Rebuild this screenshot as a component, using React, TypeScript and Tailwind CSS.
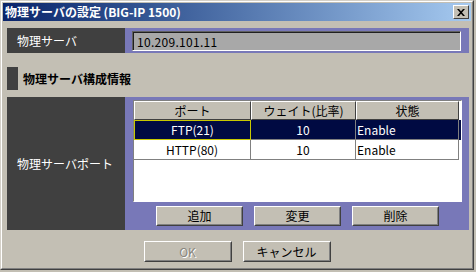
const jp = "font-['Noto_Sans_CJK_JP','Noto_Sans',sans-serif]";

function RaisedButton({ label, disabled, className = '' }: { label: string; disabled?: boolean; className?: string }) {
  return (
    <div className={`border border-t-white border-l-white border-r-[#404040] border-b-[#404040] bg-[#c3bfb4] ${className}`}>
      <div className="h-full flex items-center justify-center border border-t-[#c3bfb4] border-l-[#c3bfb4] border-r-[#808080] border-b-[#808080]">
        <span
          className={`text-[12px] leading-none ${
            disabled ? 'text-[#8a877f] [text-shadow:1px_1px_0_#ffffff]' : 'text-black'
          }`}
        >
          {label}
        </span>
      </div>
    </div>
  );
}

const columns = [
  { name: 'ポート', width: 'w-[117px]' },
  { name: 'ウェイト(比率)', width: 'w-[105px]' },
  { name: '状態', width: 'w-[103px]' },
];

const rows = [
  { port: 'FTP(21)', weight: '10', state: 'Enable', selected: true },
  { port: 'HTTP(80)', weight: '10', state: 'Enable', selected: false },
];

export default function App() {
  return (
    <div className={`w-[476px] h-[272px] bg-[#c3bfb4] overflow-hidden ${jp}`}>
      <div className="w-[474px] h-[270px] border border-t-[#d4d0c8] border-l-[#d4d0c8] border-r-[#404040] border-b-[#404040]">
        <div className="h-full border border-t-white border-l-white border-r-[#808080] border-b-[#808080] p-px flex flex-col">
          {/* Title bar */}
          <div className="h-[18px] flex items-center justify-between bg-linear-to-r from-[#0a246a] to-[#a6caf0] pl-[2px] pr-[2px]">
            <span className="text-white text-[12px] font-bold leading-none">物理サーバの設定 (BIG-IP 1500)</span>
            <div className="w-[16px] h-[14px] bg-[#c3bfb4] border border-t-white border-l-white border-r-[#404040] border-b-[#404040] flex items-center justify-center">
              <svg width="8" height="7" viewBox="0 0 8 7">
                <path d="M0 0h2l2 2.2L6 0h2L5 3.5 8 7H6L4 4.8 2 7H0l3-3.5z" fill="#000" />
              </svg>
            </div>
          </div>

          <div className="ml-[4px] w-[462px] flex flex-col">
            {/* Server row */}
            <div className="mt-[7px] h-[25px] flex">
              <div className="w-[118px] bg-[#404040] flex items-center pl-[10px]">
                <span className="text-white text-[12px] leading-none">物理サーバ</span>
              </div>
              <div className="flex-1 bg-[#7878b8] pl-[7px] pr-[8px] pt-[3px] pb-[2px]">
                <div className="h-full bg-[#a8a8a8] border border-t-[#606060] border-l-[#606060] border-r-white border-b-white">
                  <div className="h-full border-t border-l border-[#202020] flex items-center pl-[3px]">
                    <span className="text-black text-[12px] leading-none tracking-[0.3px]">10.209.101.11</span>
                  </div>
                </div>
              </div>
            </div>

            {/* Section header */}
            <div className="mt-[14px] h-[23px] flex items-center gap-[5px]">
              <div className="w-[11px] h-full bg-[#404040]" />
              <span className="text-black text-[12px] font-bold leading-none">物理サーバ構成情報</span>
            </div>

            {/* Port row */}
            <div className="mt-[7px] h-[133px] flex">
              <div className="w-[118px] bg-[#404040] flex items-center pl-[10px]">
                <span className="text-white text-[12px] leading-none">物理サーバポート</span>
              </div>
              <div className="flex-1 bg-[#7878b8] pl-[8px] pr-[7px] pt-[3px] flex flex-col">
                <div className="h-[102px] bg-white border border-t-[#808080] border-l-[#808080] border-r-white border-b-white">
                  <div className="flex">
                    {columns.map((c) => (
                      <div
                        key={c.name}
                        className={`${c.width} h-[19px] bg-[#c3bfb4] border border-t-white border-l-white border-r-[#404040] border-b-[#404040] flex items-center justify-center`}
                      >
                        <span className="text-black text-[12px] leading-none">{c.name}</span>
                      </div>
                    ))}
                  </div>
                  {rows.map((r) => (
                    <div
                      key={r.port}
                      className={`flex h-[20px] ${r.selected ? 'bg-[#000a42] text-white' : 'bg-white text-black'}`}
                    >
                      <div
                        className={`w-[117px] flex items-center justify-center border-b border-r ${
                          r.selected ? 'border border-[#c8c800]' : 'border-[#808080]'
                        }`}
                      >
                        <span className="text-[12px] leading-none">{r.port}</span>
                      </div>
                      <div className="w-[105px] flex items-center justify-center border-b border-r border-[#808080]">
                        <span className="text-[12px] leading-none">{r.weight}</span>
                      </div>
                      <div className="w-[103px] flex items-center pl-[1px] border-b border-r border-[#808080]">
                        <span className="text-[12px] leading-none">{r.state}</span>
                      </div>
                    </div>
                  ))}
                </div>
                <div className="mt-[4px] flex justify-center gap-[11px]">
                  <RaisedButton label="追加" className="w-[87px] h-[20px]" />
                  <RaisedButton label="変更" className="w-[87px] h-[20px]" />
                  <RaisedButton label="削除" className="w-[87px] h-[20px]" />
                </div>
              </div>
            </div>
          </div>

          {/* Dialog buttons */}
          <div className="mt-[11px] flex justify-center gap-[11px]">
            <RaisedButton label="OK" disabled className="w-[88px] h-[21px]" />
            <RaisedButton label="キャンセル" className="w-[88px] h-[21px]" />
          </div>
        </div>
      </div>
    </div>
  );
}
